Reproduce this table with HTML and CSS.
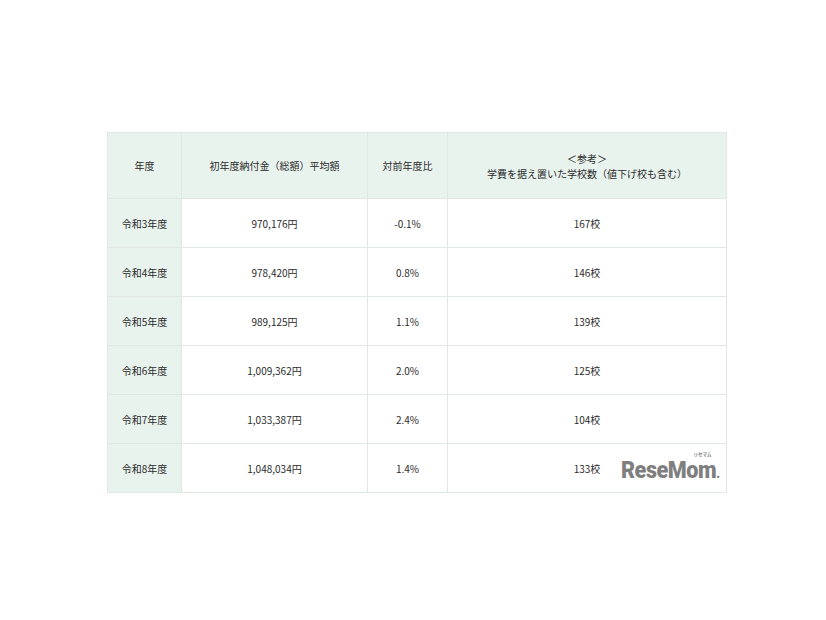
FILE: index.html
```html
<!DOCTYPE html>
<html lang="ja">
<head>
<meta charset="utf-8">
<link rel="stylesheet" href="styles.css">
</head>
<body>
<div class="page">
  <table class="fees">
    <thead>
      <tr>
        <th class="c-year">年度</th>
        <th class="c-amount">初年度納付金（総額）平均額</th>
        <th class="c-ratio">対前年度比</th>
        <th class="c-ref">＜参考＞<br>学費を据え置いた学校数（値下げ校も含む）</th>
      </tr>
    </thead>
    <tbody>
      <tr><th>令和3年度</th><td>970,176円</td><td>-0.1%</td><td>167校</td></tr>
      <tr><th>令和4年度</th><td>978,420円</td><td>0.8%</td><td>146校</td></tr>
      <tr><th>令和5年度</th><td>989,125円</td><td>1.1%</td><td>139校</td></tr>
      <tr><th>令和6年度</th><td>1,009,362円</td><td>2.0%</td><td>125校</td></tr>
      <tr><th>令和7年度</th><td>1,033,387円</td><td>2.4%</td><td>104校</td></tr>
      <tr><th>令和8年度</th><td>1,048,034円</td><td>1.4%</td><td class="last">133校<span class="logo"><span class="kana">リセマム</span>ReseMom<span class="dot">.</span></span></td></tr>
    </tbody>
  </table>
</div>
</body>
</html>
```
FILE: styles.css
```css
html, body {
  margin: 0;
  padding: 0;
  background: #ffffff;
}
.page {
  padding: 132px 0 0 107px;
}
.fees {
  border-collapse: collapse;
  font-family: "Noto Sans CJK JP", "Noto Sans", sans-serif;
  font-size: 10px;
  color: #2b2b2b;
  table-layout: fixed;
}
.fees th, .fees td {
  border: 1px solid #e1e8e4;
  text-align: center;
  vertical-align: middle;
  font-weight: normal;
  padding: 0;
  line-height: 15px;
}
.fees thead th {
  background: #e9f3ee;
  height: 65px;
}
.fees tbody th {
  background: #e9f3ee;
}
.fees tbody td, .fees tbody th {
  height: 48px;
}
.c-year { width: 73px; }
.c-amount { width: 185px; }
.c-ratio { width: 79px; }
.c-ref { width: 278px; }
.last {
  position: relative;
}
.logo {
  position: absolute;
  right: 6px;
  top: 12px;
  font-family: Roboto, "Liberation Sans", sans-serif;
  font-weight: 900;
  font-size: 24px;
  line-height: 28px;
  color: #7f7f7f;
  letter-spacing: -0.5px;
  transform: scaleX(0.9);
  transform-origin: right center;
}
.logo .kana {
  position: absolute;
  right: 9px;
  top: -5px;
  font-family: "Noto Sans CJK JP", sans-serif;
  font-size: 5px;
  line-height: 6px;
  letter-spacing: 0;
  font-weight: 700;
}
.logo .dot {
  font-size: 14px;
}
```
